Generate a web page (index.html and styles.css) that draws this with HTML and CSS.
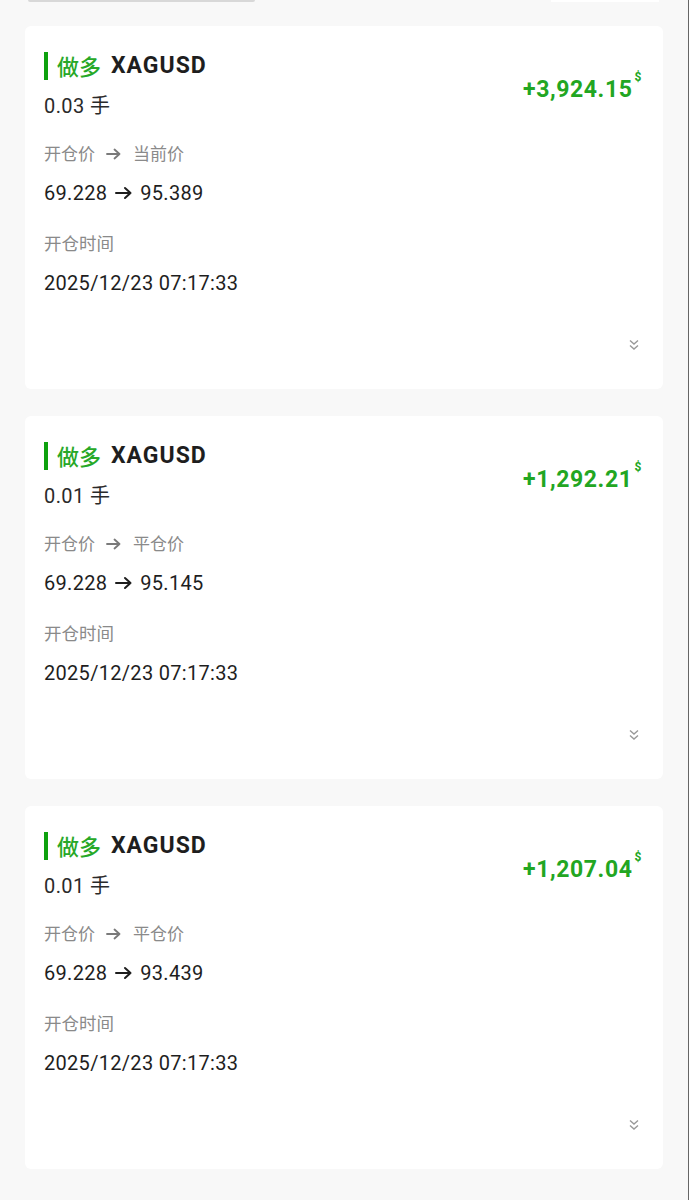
FILE: index.html
```html
<!DOCTYPE html>
<html lang="zh-CN">
<head>
    <meta charset="UTF-8">
    <meta name="viewport" content="width=device-width, initial-scale=1.0">
    <title>持仓</title>
    <link rel="stylesheet" href="styles.css">
</head>
<body>
    <div class="top-strip">
        <div class="strip-left"></div>
        <div class="strip-right"></div>
    </div>
    <div class="list">
        <div class="card">
            <div class="card-main">
                <div class="info">
                    <div class="title"><span class="side">做多</span><span class="symbol">XAGUSD</span></div>
                    <div class="lots">0.03 手</div>
                    <div class="label">开仓价<svg class="arrow" width="15" height="12" viewBox="0 0 15 12"><path d="M1 6H13.5M8.5 1.5L13.5 6L8.5 10.5"/></svg>当前价</div>
                    <div class="value">69.228<svg class="arrow" width="17" height="14" viewBox="0 0 17 14"><path d="M1 7H15.5M10 2L15.5 7L10 12"/></svg>95.389</div>
                    <div class="label label-time">开仓时间</div>
                    <div class="value value-time">2025/12/23 07:17:33</div>
                </div>
                <div class="profit">+3,924.15<sup>$</sup></div>
            </div>
            <div class="card-foot">
                <svg class="more" width="12" height="12" viewBox="0 0 12 12"><polyline points="2,1.5 6,5 10,1.5"/><polyline points="2,6.5 6,10 10,6.5"/></svg>
            </div>
        </div>
        <div class="card">
            <div class="card-main">
                <div class="info">
                    <div class="title"><span class="side">做多</span><span class="symbol">XAGUSD</span></div>
                    <div class="lots">0.01 手</div>
                    <div class="label">开仓价<svg class="arrow" width="15" height="12" viewBox="0 0 15 12"><path d="M1 6H13.5M8.5 1.5L13.5 6L8.5 10.5"/></svg>平仓价</div>
                    <div class="value">69.228<svg class="arrow" width="17" height="14" viewBox="0 0 17 14"><path d="M1 7H15.5M10 2L15.5 7L10 12"/></svg>95.145</div>
                    <div class="label label-time">开仓时间</div>
                    <div class="value value-time">2025/12/23 07:17:33</div>
                </div>
                <div class="profit">+1,292.21<sup>$</sup></div>
            </div>
            <div class="card-foot">
                <svg class="more" width="12" height="12" viewBox="0 0 12 12"><polyline points="2,1.5 6,5 10,1.5"/><polyline points="2,6.5 6,10 10,6.5"/></svg>
            </div>
        </div>
        <div class="card">
            <div class="card-main">
                <div class="info">
                    <div class="title"><span class="side">做多</span><span class="symbol">XAGUSD</span></div>
                    <div class="lots">0.01 手</div>
                    <div class="label">开仓价<svg class="arrow" width="15" height="12" viewBox="0 0 15 12"><path d="M1 6H13.5M8.5 1.5L13.5 6L8.5 10.5"/></svg>平仓价</div>
                    <div class="value">69.228<svg class="arrow" width="17" height="14" viewBox="0 0 17 14"><path d="M1 7H15.5M10 2L15.5 7L10 12"/></svg>93.439</div>
                    <div class="label label-time">开仓时间</div>
                    <div class="value value-time">2025/12/23 07:17:33</div>
                </div>
                <div class="profit">+1,207.04<sup>$</sup></div>
            </div>
            <div class="card-foot">
                <svg class="more" width="12" height="12" viewBox="0 0 12 12"><polyline points="2,1.5 6,5 10,1.5"/><polyline points="2,6.5 6,10 10,6.5"/></svg>
            </div>
        </div>
    </div>
</body>
</html>
```

FILE: styles.css
```css
body {
    margin: 0;
    padding: 0;
    background: #f8f8f8;
    font-family: Roboto, "Noto Sans CJK SC", sans-serif;
    color: #222;
    height: 1200px;
    border-right: 1px solid #666;
    box-sizing: border-box;
}

.top-strip {
    display: flex;
    justify-content: space-between;
    height: 2px;
    padding: 0 29px 0 28px;
}

.strip-left {
    width: 227px;
    background: #d8d8d8;
    border-radius: 0 0 4px 4px;
}

.strip-right {
    width: 108px;
    background: #fff;
}

.list {
    display: flex;
    flex-direction: column;
    gap: 27px;
    padding: 24px 25px 0 25px;
}

.card {
    background: #fff;
    border-radius: 6px;
    height: 363px;
    box-sizing: border-box;
    padding: 25px 23px 38px 19px;
    display: flex;
    flex-direction: column;
}

.card-main {
    display: flex;
    justify-content: space-between;
    align-items: flex-start;
}

.title {
    display: flex;
    align-items: center;
    height: 28px;
    margin-top: 1px;
    margin-bottom: 1px;
    border-left: 4px solid #0ea10e;
    padding-left: 9px;
    font-size: 22px;
}

.side {
    color: #27a827;
    font-family: "Noto Sans CJK SC", sans-serif;
    font-weight: 500;
    margin-right: 10px;
    line-height: 28px;
    position: relative;
    top: -1px;
}

.symbol {
    font-weight: bold;
    color: #1e1e1e;
    font-size: 23px;
    letter-spacing: 1px;
    line-height: 28px;
}

.lots {
    margin-top: 12px;
    font-size: 20px;
    line-height: 28px;
    color: #2a2a2a;
    letter-spacing: 0.4px;
}

.label {
    display: flex;
    align-items: center;
    margin-top: 22px;
    font-size: 17px;
    line-height: 24px;
    color: #8a8a8a;
}

.label .arrow {
    margin: 0 12px 0 11px;
    stroke: #7a7a7a;
    stroke-width: 1.8;
}

.label-time {
    margin-top: 25px;
    font-size: 17.5px;
}

.value {
    display: flex;
    align-items: center;
    margin-top: 13px;
    font-size: 20px;
    line-height: 28px;
    color: #1e1e1e;
    letter-spacing: 0.3px;
}

.value .arrow {
    margin: 0 8px 0 8px;
    stroke: #1e1e1e;
    stroke-width: 2;
}

.arrow {
    fill: none;
    stroke-linecap: round;
    stroke-linejoin: round;
}

.value-time {
    margin-top: 13px;
}

.profit {
    margin-top: 24px;
    margin-right: -2px;
    font-size: 23px;
    font-weight: bold;
    line-height: 30px;
    color: #22a622;
    letter-spacing: 0.6px;
}

.profit sup {
    font-size: 12px;
    margin-left: 2px;
    line-height: 0;
    vertical-align: 16px;
}

.card-foot {
    margin-top: auto;
    display: flex;
    justify-content: flex-end;
}

.more {
    fill: none;
    stroke: #999;
    stroke-width: 1.4;
}
```
